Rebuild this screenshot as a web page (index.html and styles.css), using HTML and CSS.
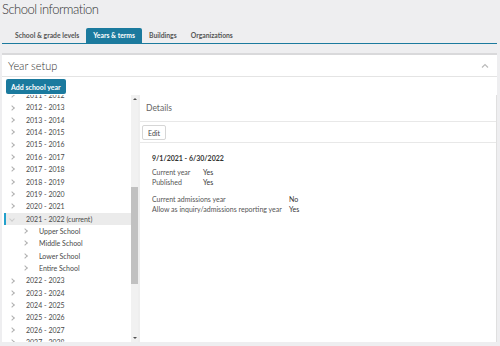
FILE: index.html
```html
<!DOCTYPE html>
<html lang="en">
<head>
    <meta charset="UTF-8">
    <meta name="viewport" content="width=device-width, initial-scale=1.0">
    <title>School information</title>
    <link rel="stylesheet" href="styles.css">
</head>
<body>
    <h1 class="page_title">School information</h1>
    <ul class="tabs">
        <li>School &amp; grade levels</li>
        <li class="on">Years &amp; terms</li>
        <li>Buildings</li>
        <li>Organizations</li>
    </ul>

    <div class="panel">
        <div class="panel_head">
            <span>Year setup</span>
            <svg class="caret" width="8" height="5" viewBox="0 0 8 5"><path d="M1 4.5 L4 1.5 L7 4.5" fill="none" stroke="#bbb" stroke-width="1.2"/></svg>
        </div>
        <div class="toolbar">
            <button class="btn_primary">Add school year</button>
        </div>
        <div class="split">
            <div class="tree">
                <ul class="years">
                    <li><i class="chev"></i>2011 - 2012</li>
                    <li><i class="chev"></i>2012 - 2013</li>
                    <li><i class="chev"></i>2013 - 2014</li>
                    <li><i class="chev"></i>2014 - 2015</li>
                    <li><i class="chev"></i>2015 - 2016</li>
                    <li><i class="chev"></i>2016 - 2017</li>
                    <li><i class="chev"></i>2017 - 2018</li>
                    <li><i class="chev"></i>2018 - 2019</li>
                    <li><i class="chev"></i>2019 - 2020</li>
                    <li><i class="chev"></i>2020 - 2021</li>
                    <li class="on"><i class="chev open"></i>2021 - 2022 (current)</li>
                    <li class="sub"><i class="chev"></i>Upper School</li>
                    <li class="sub"><i class="chev"></i>Middle School</li>
                    <li class="sub"><i class="chev"></i>Lower School</li>
                    <li class="sub"><i class="chev"></i>Entire School</li>
                    <li><i class="chev"></i>2022 - 2023</li>
                    <li><i class="chev"></i>2023 - 2024</li>
                    <li><i class="chev"></i>2024 - 2025</li>
                    <li><i class="chev"></i>2025 - 2026</li>
                    <li><i class="chev"></i>2026 - 2027</li>
                    <li><i class="chev"></i>2027 - 2028</li>
                </ul>
            </div>
            <div class="scrollbar">
                <span class="arrow up"></span>
                <div class="track"><div class="thumb"></div></div>
                <span class="arrow down"></span>
            </div>
            <div class="details">
                <div class="details_head">Details</div>
                <div class="details_bar"><button class="btn_default">Edit</button></div>
                <div class="details_body">
                    <p class="dates">9/1/2021 - 6/30/2022</p>
                    <dl class="info">
                        <dt>Current year</dt><dd>Yes</dd>
                        <dt>Published</dt><dd>Yes</dd>
                    </dl>
                    <dl class="info wide">
                        <dt>Current admissions year</dt><dd>No</dd>
                        <dt>Allow as inquiry/admissions reporting year</dt><dd>Yes</dd>
                    </dl>
                </div>
            </div>
        </div>
    </div>
</body>
</html>
```

FILE: styles.css
```css
* {margin: 0; padding: 0; box-sizing: border-box;}
ul {list-style: none;}
body {
    background: #eeeef0;
    font-family: "Lato", "Open Sans", sans-serif;
    color: #444;
    height: 346px;
    overflow: hidden;
}
.page_title {
    font-size: 13px;
    font-weight: 300;
    letter-spacing: -0.5px;
    line-height: 19px;
    color: #333;
    padding-left: 2px;
}
.tabs {
    display: flex;
    margin: 9px 3px 0 2px;
    padding-left: 6px;
    border-bottom: 1px solid #1b7a9e;
}
.tabs li {
    font-size: 6.8px;
    font-weight: bold;
    color: #555;
    padding: 0 7px;
    height: 15px;
    line-height: 15px;
}
.tabs li.on {
    background: #1b7a9e;
    color: #fff;
    border-radius: 2px 2px 0 0;
}
.panel {
    margin: 9px 3px 0 2px;
    border-top: 2px solid #d9d9db;
    background: #fff;
}
.panel_head {
    display: flex;
    justify-content: space-between;
    align-items: center;
    height: 22px;
    padding: 0 8px 0 6px;
    font-size: 11px;
    font-weight: 300;
    color: #333;
    border-bottom: 1px solid #e4e4e4;
}
.toolbar {
    display: flex;
    padding: 2px 4px 1px;
}
.btn_primary {
    font-family: inherit;
    font-size: 7px;
    font-weight: bold;
    color: #fff;
    background: #1b7a9e;
    border: 0;
    border-radius: 2px;
    height: 15px;
    padding: 0 5px;
}
.split {
    display: flex;
    height: 247px;
}
.tree {
    width: 129px;
    overflow: hidden;
    padding-left: 2px;
}
.years {
    margin-top: -6px;
}
.years li {
    height: 12.37px;
    line-height: 12.37px;
    font-size: 7px;
    color: #4a4a4a;
    padding-left: 6px;
    display: flex;
    align-items: center;
}
.years li.on {
    background: #ebebeb;
    border-left: 2px solid #23a1cc;
    padding-left: 4px;
}
.years li.sub {
    padding-left: 19px;
}
.chev {
    display: inline-block;
    width: 4px;
    height: 4px;
    border-right: 1px solid #b0b0b0;
    border-top: 1px solid #b0b0b0;
    transform: rotate(45deg);
    margin-right: 12px;
}
.chev.open {
    transform: rotate(135deg);
    border-color: #ccc;
}
.scrollbar {
    width: 7px;
    background: #f1f1f1;
    display: flex;
    flex-direction: column;
    align-items: center;
}
.arrow {
    width: 0;
    height: 0;
    border-left: 2px solid transparent;
    border-right: 2px solid transparent;
    margin: 3px 0;
}
.arrow.up {border-bottom: 2px solid #505050;}
.arrow.down {border-top: 2px solid #505050;}
.track {
    flex: 1;
    width: 100%;
}
.thumb {
    margin-top: 84px;
    height: 97px;
    background: #c1c1c1;
}
.details {
    flex: 1;
    border-left: 2px solid #eeeeee;
    border-right: 1px solid #e0e0e0;
}
.details_head {
    height: 27px;
    line-height: 27px;
    padding-left: 6px;
    font-size: 8.5px;
    color: #666;
    border-bottom: 1px solid #e8e8e8;
}
.details_bar {
    display: flex;
    padding: 3px 2px 2px;
    border-bottom: 1px solid #e8e8e8;
}
.btn_default {
    font-family: inherit;
    font-size: 7px;
    color: #444;
    background: #fff;
    border: 1px solid #d6d6d6;
    border-radius: 2px;
    height: 15px;
    padding: 0 5px;
}
.details_body {
    padding: 11px 12px;
    font-size: 7px;
    color: #555;
}
.dates {
    font-weight: bold;
    color: #333;
    margin-bottom: 5px;
}
.info {
    display: grid;
    grid-template-columns: 51px auto;
    justify-content: start;
    line-height: 10px;
    margin-bottom: 7px;
}
.info.wide {
    grid-template-columns: 137px auto;
}
.info dd {
    color: #333;
}
```
